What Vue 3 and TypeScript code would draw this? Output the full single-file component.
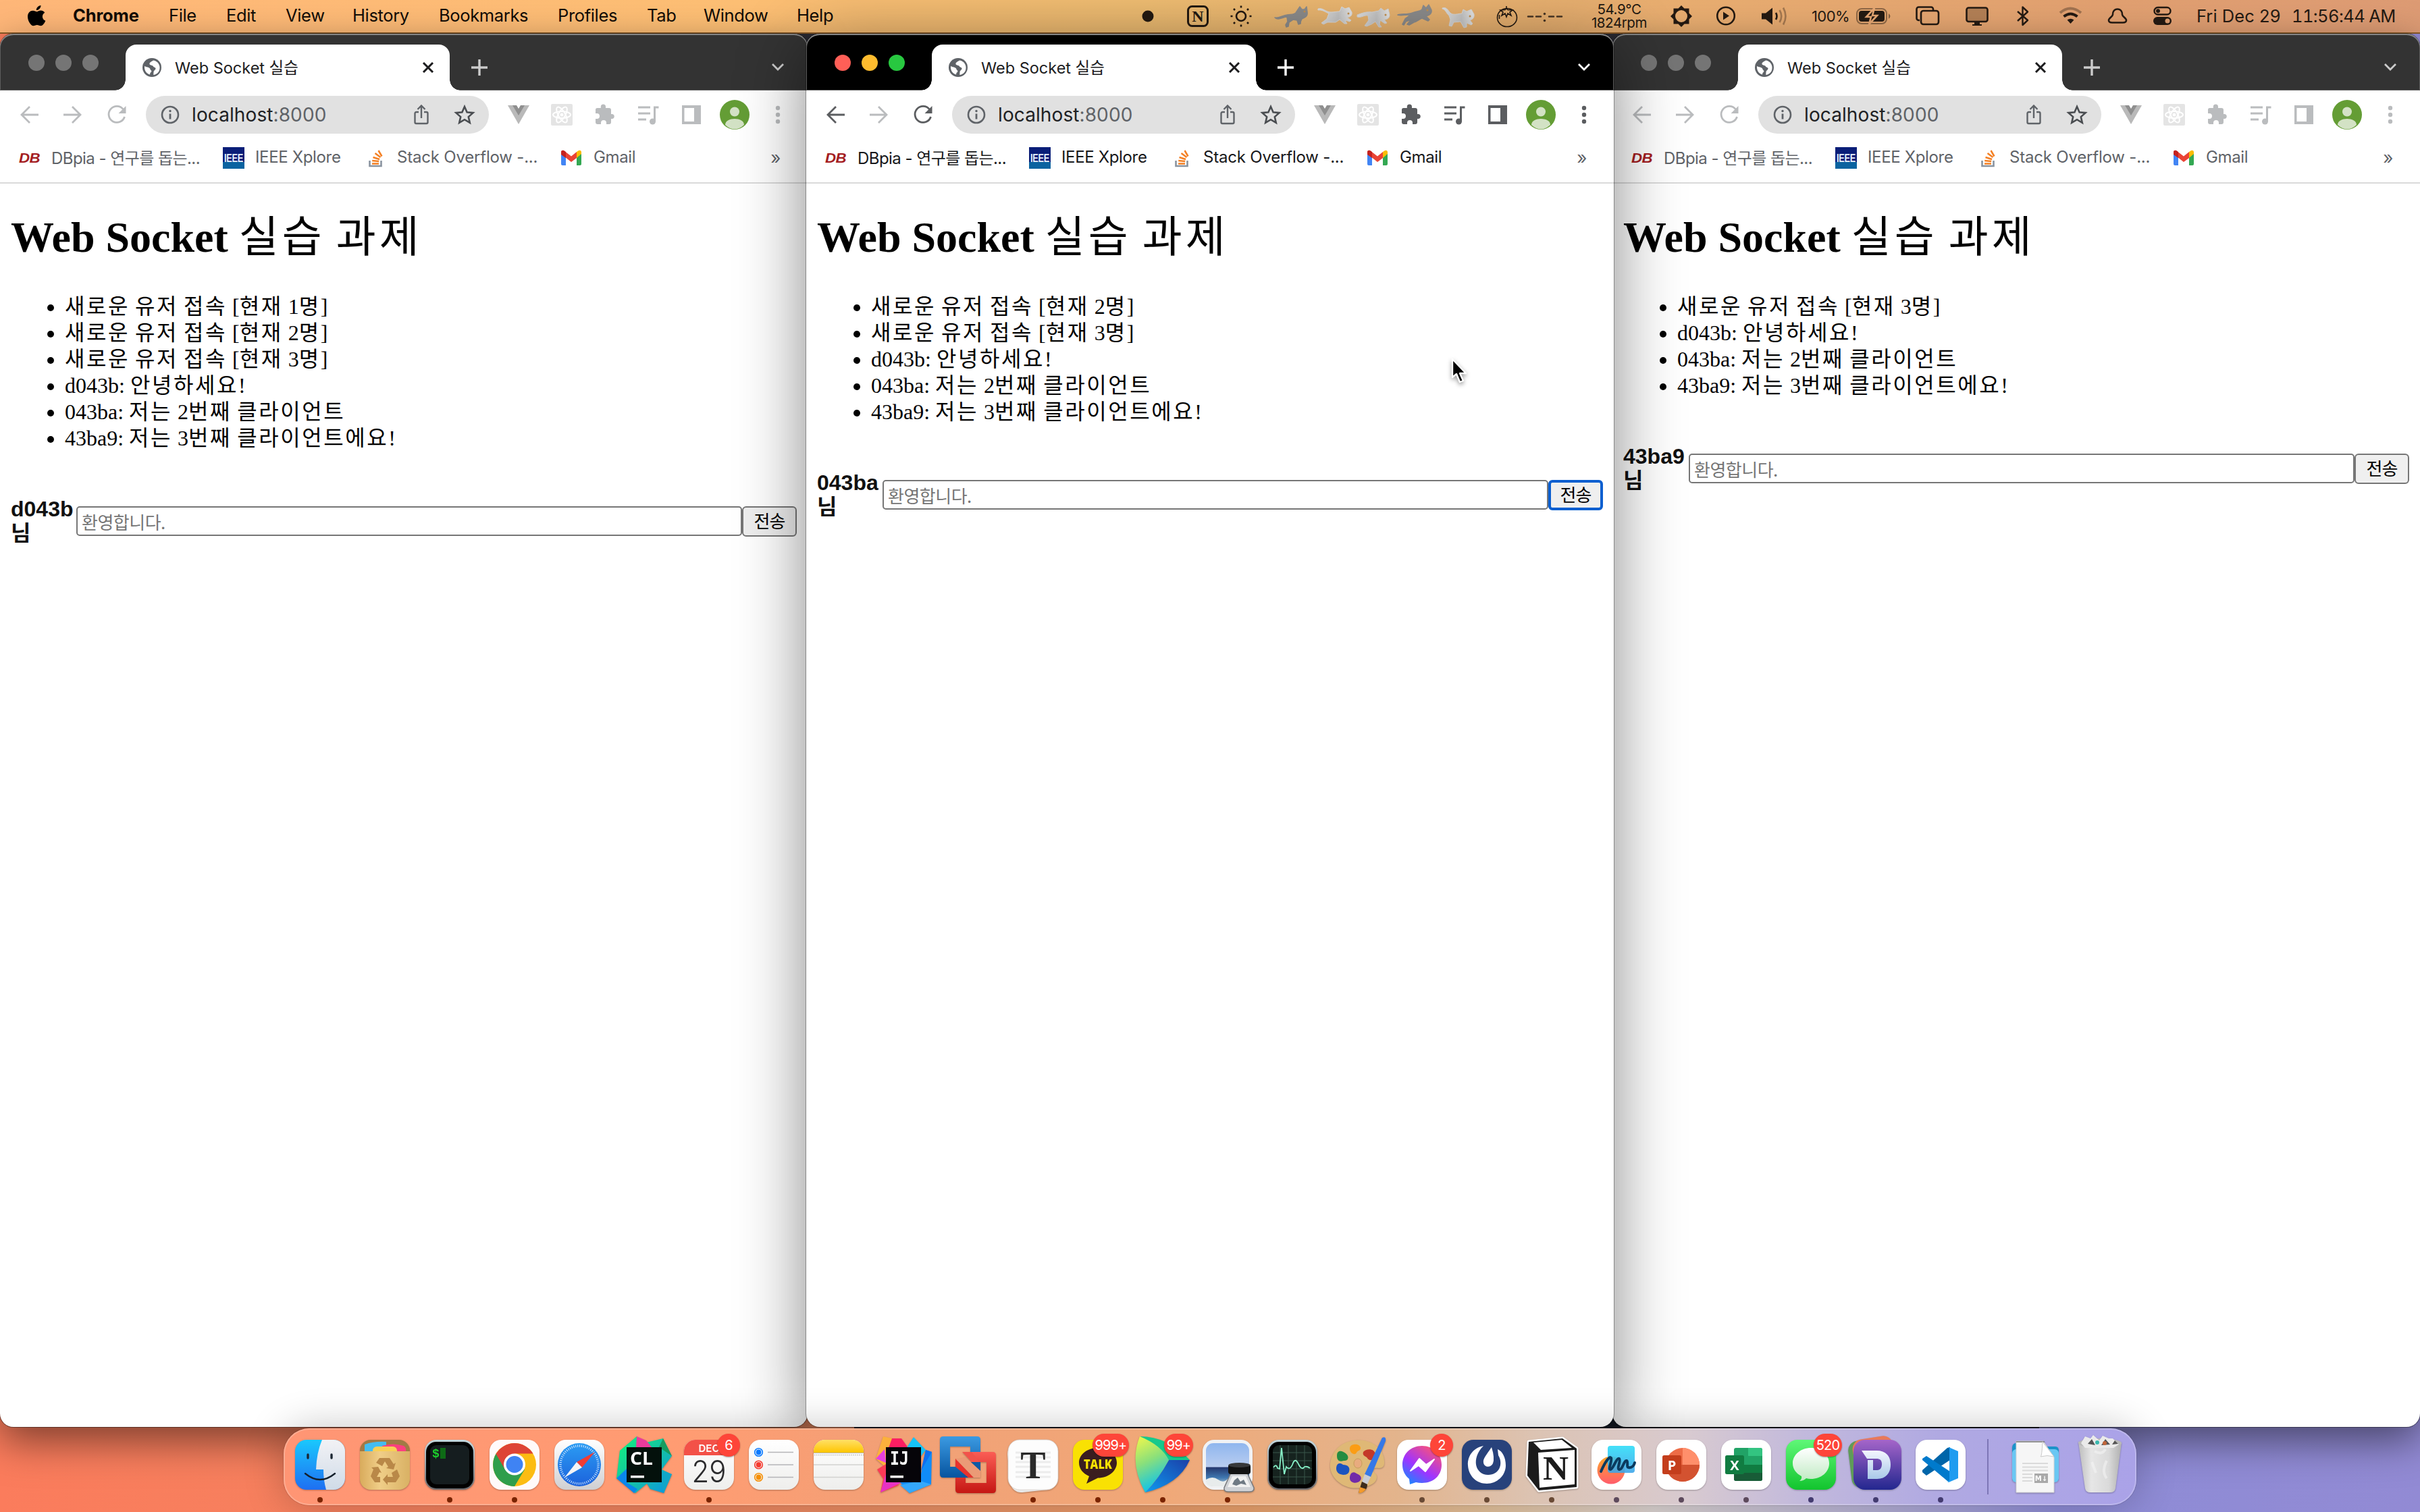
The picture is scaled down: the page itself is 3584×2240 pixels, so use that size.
<script setup lang="ts">
interface ChatWindow {
  id: string
  left: number
  active: boolean
  logs: string[]
}

const menus = [
  { label: 'File', width: 85 },
  { label: 'Edit', width: 88 },
  { label: 'View', width: 99 },
  { label: 'History', width: 128 },
  { label: 'Bookmarks', width: 176 },
  { label: 'Profiles', width: 132 },
  { label: 'Tab', width: 84 },
  { label: 'Window', width: 138 },
  { label: 'Help', width: 60 },
]

const windows: ChatWindow[] = [
  {
    id: 'd043b',
    left: 0,
    active: false,
    logs: [
      '새로운 유저 접속 [현재 1명]',
      '새로운 유저 접속 [현재 2명]',
      '새로운 유저 접속 [현재 3명]',
      'd043b: 안녕하세요!',
      '043ba: 저는 2번째 클라이언트',
      '43ba9: 저는 3번째 클라이언트에요!',
    ],
  },
  {
    id: '43ba9',
    left: 2388,
    active: false,
    logs: [
      '새로운 유저 접속 [현재 3명]',
      'd043b: 안녕하세요!',
      '043ba: 저는 2번째 클라이언트',
      '43ba9: 저는 3번째 클라이언트에요!',
    ],
  },
  {
    id: '043ba',
    left: 1194,
    active: true,
    logs: [
      '새로운 유저 접속 [현재 2명]',
      '새로운 유저 접속 [현재 3명]',
      'd043b: 안녕하세요!',
      '043ba: 저는 2번째 클라이언트',
      '43ba9: 저는 3번째 클라이언트에요!',
    ],
  },
]

function runs(text: string) {
  return (text.match(/[가-힣]+|[^가-힣]+/g) ?? []).map((t) => ({ t, ko: /[가-힣]/.test(t) }))
}
</script>

<template>
  <div class="desktop">
    <svg class="defs" width="0" height="0">
      <defs>
        <linearGradient id="gBlue" x1="0" y1="0" x2="0" y2="1"><stop offset="0" stop-color="#1ac8fd" /><stop offset="1" stop-color="#1e6ff2" /></linearGradient>
        <linearGradient id="gGrey" x1="0" y1="0" x2="0" y2="1"><stop offset="0" stop-color="#f2f2f5" /><stop offset="1" stop-color="#cfdbe8" /></linearGradient>
        <linearGradient id="gWhite" x1="0" y1="0" x2="0" y2="1"><stop offset="0" stop-color="#fff" /><stop offset="1" stop-color="#eeeeec" /></linearGradient>
        <linearGradient id="gSteel" x1="0" y1="0" x2="0" y2="1"><stop offset="0" stop-color="#c4d8de" /><stop offset="1" stop-color="#6b6a6e" /></linearGradient>
        <linearGradient id="gSand" x1="0" y1="0" x2="1" y2="0"><stop offset="0" stop-color="#d9ab5c" /><stop offset=".4" stop-color="#f0ce88" /><stop offset="1" stop-color="#d9b164" /></linearGradient>
        <linearGradient id="gSafari" x1="0" y1="0" x2="0" y2="1"><stop offset="0" stop-color="#2b9cf3" /><stop offset="1" stop-color="#1c62dc" /></linearGradient>
        <linearGradient id="gSafariBg" x1="0" y1="0" x2="0" y2="1"><stop offset="0" stop-color="#fff" /><stop offset="1" stop-color="#cfcfd2" /></linearGradient>
        <linearGradient id="gCl" x1="0" y1="0" x2="1" y2="1"><stop offset="0" stop-color="#12f37a" /><stop offset=".55" stop-color="#14c0a8" /><stop offset="1" stop-color="#0a92e8" /></linearGradient>
        <linearGradient id="gYellow" x1="0" y1="0" x2="0" y2="1"><stop offset="0" stop-color="#ffe066" /><stop offset="1" stop-color="#ffc500" /></linearGradient>
        <linearGradient id="gVmB" x1="0" y1="0" x2="0" y2="1"><stop offset="0" stop-color="#3b9ae2" /><stop offset="1" stop-color="#07549f" /></linearGradient>
        <linearGradient id="gVmR" x1="0" y1="0" x2="0" y2="1"><stop offset="0" stop-color="#fb5d55" /><stop offset="1" stop-color="#c51713" /></linearGradient>
        <linearGradient id="gLeaf" x1="0" y1="0" x2=".3" y2="1"><stop offset="0" stop-color="#f4f84a" /><stop offset=".5" stop-color="#8be07a" /><stop offset="1" stop-color="#10c4e8" /></linearGradient>
        <linearGradient id="gLeaf2" x1="1" y1="0" x2="0" y2="1"><stop offset="0" stop-color="#1b3fa8" /><stop offset="1" stop-color="#0d9af0" /></linearGradient>
        <linearGradient id="gSky" x1="0" y1="0" x2="0" y2="1"><stop offset="0" stop-color="#8fb6ee" /><stop offset=".55" stop-color="#b9cdf0" /><stop offset=".56" stop-color="#24376e" /><stop offset=".8" stop-color="#3f77b0" /><stop offset="1" stop-color="#c9d6d6" /></linearGradient>
        <linearGradient id="gMsgr" x1="0.1" y1="1" x2=".8" y2="0"><stop offset="0" stop-color="#0b8fff" /><stop offset=".45" stop-color="#a033ff" /><stop offset="1" stop-color="#ff5470" /></linearGradient>
        <linearGradient id="gFree" x1="0" y1="0" x2="0" y2="1"><stop offset="0" stop-color="#2adcf8" /><stop offset="1" stop-color="#3ba3e8" /></linearGradient>
        <linearGradient id="gFreeO" x1="0" y1="0" x2="0" y2="1"><stop offset="0" stop-color="#ffa72a" /><stop offset="1" stop-color="#ff5c6c" /></linearGradient>
        <linearGradient id="gGreen" x1="0" y1="0" x2="0" y2="1"><stop offset="0" stop-color="#5ff777" /><stop offset="1" stop-color="#12c42e" /></linearGradient>
        <linearGradient id="gBubble" x1="0" y1="0" x2="0" y2="1"><stop offset="0" stop-color="#fff" /><stop offset="1" stop-color="#bfeac2" /></linearGradient>
        <linearGradient id="gDash" x1="0" y1="0" x2="0" y2="1"><stop offset="0" stop-color="#a565c9" /><stop offset="1" stop-color="#23278f" /></linearGradient>
        <linearGradient id="gD" x1="0" y1="0" x2="0" y2="1"><stop offset="0" stop-color="#f4f6ff" /><stop offset="1" stop-color="#a9c8e8" /></linearGradient>
        <linearGradient id="gBin" x1="0" y1="0" x2="1" y2="0"><stop offset="0" stop-color="#bdbdbd" /><stop offset=".3" stop-color="#e6e6e6" /><stop offset=".7" stop-color="#dadada" /><stop offset="1" stop-color="#b0b0b0" /></linearGradient>
        <linearGradient id="gCat" x1="0" y1="0" x2="1" y2="0"><stop offset="0" stop-color="#e6e6e6" /><stop offset=".6" stop-color="#c9c9c9" /><stop offset="1" stop-color="#ececec" /></linearGradient>
      </defs>
    </svg>

    <header class="menubar">
      <svg class="apple" width="108" height="48" viewBox="0 0 108 48">
        <path d="M60.500 8c.3 3-2.800 7.300-6.700 7.200-.3-3.100 3-7 6.700-7.200zM54.500 17.300c1.500 0 3.400-1.700 6-1.700 2 0 4.300 1.100 5.800 3.200-5 2.900-4.300 9.900 1 12-1 3.100-4 7.400-6.800 7.400-2.200 0-3-1.300-5.600-1.300-2.700 0-3.600 1.300-5.600 1.300-3.600 0-8.300-7.300-8.300-13.500 0-6.100 4-9 7.600-9 2.500 0 4.500 1.600 5.900 1.600z" />
      </svg>
      <span class="menu strong">Chrome</span>
      <span v-for="m in menus" :key="m.label" class="menu" :style="{ width: m.width + 'px' }">{{ m.label }}</span>
      <div class="spacer"></div>
      <div class="status">
        <svg width="64" height="48" viewBox="1680 0 64 48"><circle cx="1700" cy="24" r="8.500" fill="#241a12" /></svg>
        <svg width="66" height="48" viewBox="1744 0 66 48"><rect x="1759.500" y="9.500" width="29" height="29" rx="6" class="ln" stroke-width="3" /><text x="1774" y="32" text-anchor="middle" class="nglyph">N</text></svg>
        <svg width="66" height="48" viewBox="1810 0 66 48"><g class="ln" stroke-width="2.600"><circle cx="1838" cy="24" r="7" /><path d="M1838 8.500v3M1838 36.500v3M1822.500 24h3M1850.500 24h3M1827 13l2 2M1847 33l2 2M1827 35l2-2M1847 15l2-2" /></g></svg>
        <svg width="320" height="48" viewBox="1876 0 320 48">
          <g fill="#8f8f8f" stroke="#8f8f8f" stroke-width="1.600" stroke-linejoin="round"><path d="M1888 26c6 2 10-3 18-4 6-1 10 0 13-3l6-9 3 4h4l3-4 1 8c1 6-3 8-8 10-2 3-2 4-2 7l-3 1-2-6-6-1-6 4-1 6-3 1-1-3 3-5-1-7c-6 0-13 6-18 1z" /><path d="M2070 22c6-2 14 0 22-3 8-3 11-2 14-5l2-6 4 4 4-5 4 8c1 6-4 8-8 9l5 5-2 2-9-4c-5 2-7 5-12 6l-7 4-3-1 6-7-8 3-3 5-2-1 4-8 8-6c-6-1-13 2-19 0z" /></g>
          <g fill="url(#gCat)"><path d="M1952 13c8-2 11 5 19 5 6 0 9-1 13-1l3-7 5 3 6-2 4 7c1 6-3 7-7 8l6 4-2 2-7-2 3 5-4 0-7-6-6 4h-12l-6 3-3-2 8-6 3-8c-5-2-10-6-16-5z" stroke="#e2e2e2" stroke-linejoin="round" /><path d="M2010 22c8-3 14-5 22-4l10-2 3-4 5 4 6-3 2 9c0 5-4 7-8 7l4 5-3 1-7-5-1 6 3 4-4 0-5-8-6 4-7 3-3-1 6-8-1-7c-6-1-10 4-16 2z" stroke="#dadada" stroke-linejoin="round" /><path d="M2136 12c8-3 9 7 15 9 6 1 10-1 14-1l2-6 5 3 7-3 4 7c1 6-3 8-6 9l4 5-2 2-7-3v6l-4 1-5-9-10 1-3 6-4-1 2-9-2-6c-4-3-5-9-10-10z" stroke="#dedede" stroke-linejoin="round" /></g>
          <g fill="#c9934f"><circle cx="1932" cy="17" r="1.500" /><circle cx="1997" cy="20" r="1.500" /><circle cx="2052" cy="22" r="1.500" /><circle cx="2114" cy="15" r="1.500" /><circle cx="2177" cy="24" r="1.500" /></g>
        </svg>
        <svg width="62" height="48" viewBox="2196 0 62 48"><g class="ln" stroke-width="1.600"><ellipse cx="2232" cy="26" rx="14.500" ry="13.500" /><path d="M2231 9v5M2222 15l7-.5 2-2.500 2 2.500 7 .5-4 3 2 5-5-3-2 5-2-5-5 3 2-5zM2220.500 22v6" /></g></svg>
        <svg width="88" height="48" viewBox="2258 0 88 48"><g stroke="#4a3726" stroke-width="2.600" stroke-linecap="round"><path d="M2263 24.500h7M2275 24.500h7M2294 24.500h7M2306 24.500h7" /></g><circle cx="2287.500" cy="20.500" r="1.800" fill="#4a3726" /><circle cx="2287.500" cy="30.500" r="1.800" fill="#4a3726" /></svg>
        <div class="temps"><span>54.9°C</span><span>1824rpm</span></div>
        <svg width="76" height="48" viewBox="2450 0 76 48"><path fill-rule="evenodd" fill="#241a12" d="M2490 8l4.500 4.500h7v7L2506 24l-4.500 4.500v7h-7L2490 40l-4.500-4.500h-7v-7L2474 24l4.500-4.500v-7h7zM2490 15a9 9 0 1 0 0 18a9 9 0 1 0 0-18z" /></svg>
        <svg width="64" height="48" viewBox="2526 0 64 48"><circle cx="2556" cy="23.500" r="12.800" class="ln" stroke-width="2.600" /><path d="M2552 17.500v12l9-6z" fill="#241a12" /></svg>
        <svg width="88" height="48" viewBox="2590 0 88 48"><path d="M2609 19.500h6l10-8v25l-10-8h-6z" fill="#241a12" /><path d="M2630 19q3 5 0 10" class="ln" stroke-width="2.600" /><g class="ln" opacity=".35" stroke-width="2.600"><path d="M2635.500 15q5.500 9 0 18M2641 11.500q7 12.500 0 25" /></g></svg>
        <span class="percent">100%</span>
        <svg width="80" height="48" viewBox="2745 0 80 48"><rect x="2750" y="13" width="44" height="22" rx="7" class="ln" stroke-width="2" opacity=".45" /><path d="M2797 20q5 4 0 8z" fill="#241a12" opacity=".5" /><rect x="2753" y="16" width="38" height="16" rx="4" fill="#241a12" /><path d="M2776 12l-12 13h7l-3 11 12-13h-7z" fill="#241a12" stroke="#e4a571" stroke-width="2.600" /></svg>
        <svg width="70" height="48" viewBox="2825 0 70 48"><g class="ln" stroke-width="2.600"><path d="M2843 30h-1.500a3 3 0 0 1-3-3V13.500a3 3 0 0 1 3-3H2860a3 3 0 0 1 3 3V15" /><rect x="2845" y="16" width="26" height="20" rx="3.500" /></g></svg>
        <svg width="76" height="48" viewBox="2895 0 76 48"><rect x="2912.500" y="11.500" width="31" height="20.500" rx="3" fill="#b27f55" stroke="#241a12" stroke-width="2.600" /><path d="M2924 33h8v3h3v2h-14v-2h3z" fill="#241a12" /></svg>
        <svg width="62" height="48" viewBox="2971 0 62 48"><path d="M2988 17l15 13-7.500 7V10.500l7.500 7L2988 31" class="ln" stroke-width="2.400" stroke-linejoin="round" /></svg>
        <svg width="72" height="48" viewBox="3033 0 72 48"><path d="M3051 19q15-13 31 0" class="ln" stroke-width="4" opacity=".35" /><path d="M3056.500 24.500q10-8 20 0" class="ln" stroke-width="4" /><path d="M3066.500 35l-5-5.500q5-3.500 10 0z" fill="#241a12" /></svg>
        <svg width="68" height="48" viewBox="3105 0 68 48"><path d="M3136 13.500c5 0 7 4 7 8 0 3 6 5 6 8.500 0 3-3 3.500-5 3.500h-16c-2 0-5-.5-5-3.500 0-3.500 6-5.500 6-8.500 0-4 2-8 7-8z" class="ln" stroke-width="2.600" /></svg>
        <svg width="80" height="48" viewBox="3173 0 80 48"><rect x="3190.500" y="11" width="24" height="10.500" rx="5.250" class="ln" stroke-width="2.400" /><circle cx="3196" cy="16.200" r="3" fill="#241a12" /><rect x="3189" y="25" width="27" height="12" rx="6" fill="#241a12" /><circle cx="3210" cy="31" r="3.500" fill="#e0a072" /></svg>
        <span class="clock date">Fri Dec 29</span>
        <span class="clock time">11:56:44 AM</span>
      </div>
    </header>

    <section
      v-for="w in windows"
      :key="w.id"
      class="window"
      :class="{ active: w.active }"
      :style="{ left: w.left + 'px' }"
    >
      <div class="tabstrip">
        <div class="lights"><i></i><i></i><i></i></div>
        <div class="tab">
          <svg width="28" height="28" viewBox="0 0 28 28"><circle cx="14" cy="14" r="14" fill="#5f6368" /><path d="M16 3.500c-3 2-6 3-5.500 5.500.5 2 5 1.500 5.500 3.500.5 1.500 4 1 3.500 3.500-.5 2-3 2.500-3 4.500 0 2-.5 3.500 0 4.500 6-1 9.500-5.500 9-12C25 8 21 4 16 3.500zM3 12c2 1.500 5 1 7 2.500 2 1.300 1 2.500 2.500 3.500 1.500 1 1 2.500-.5 3.500-1 .6-.5 2-1 3C5.500 23 2.500 18 3 12z" fill="#fff" /></svg>
          <span class="tabtitle">Web Socket 실습</span>
          <svg width="18" height="16" viewBox="0 0 18 16"><path d="M2 1l14 14M16 1L2 15" stroke="#1c1c1e" stroke-width="3" /></svg>
        </div>
        <svg class="plus" width="24" height="24" viewBox="0 0 24 24"><path d="M12 0v24M0 12h24" stroke="currentColor" stroke-width="3.400" /></svg>
        <svg class="down" width="20" height="14" viewBox="0 0 20 14"><path d="M2 2l8 8 8-8" fill="none" stroke="currentColor" stroke-width="2.800" /></svg>
      </div>

      <div class="toolbar">
        <svg class="tool" width="216" height="72" viewBox="0 134 216 72" fill="none" stroke-width="2.800">
          <path d="M57 170H33M44 158l-12 12 12 12" stroke="currentColor" />
          <path d="M94 170h24M107 158l12 12-12 12" stroke="#babcbe" />
          <path d="M182.500 162a12 12 0 1 0 2 11" stroke="currentColor" /><path d="M186.500 157v11h-11z" fill="currentColor" />
        </svg>
        <div class="omnibox">
          <svg width="28" height="28" viewBox="0 0 28 28"><circle cx="14" cy="14" r="12" fill="none" stroke="#5f6368" stroke-width="2.600" /><path d="M14 12.500v8" stroke="#5f6368" stroke-width="2.800" /><circle cx="14" cy="8.500" r="1.700" fill="#5f6368" /></svg>
          <span class="url">localhost<em>:8000</em></span>
          <svg class="share" width="24" height="32" viewBox="0 0 24 32" fill="none" stroke="#5f6368" stroke-width="2.400"><path d="M8 12H4.500A2 2 0 0 0 2.500 14v13a2 2 0 0 0 2 2h15a2 2 0 0 0 2-2V14a2 2 0 0 0-2-2H16M12 21V3M6.500 8L12 2.500 17.500 8" /></svg>
          <svg width="32" height="32" viewBox="0 0 32 32"><path d="M16 4l3.600 8.300 9 .8-6.800 6 2 8.800L16 23.200 8.200 27.900l2-8.800-6.800-6 9-.8z" fill="none" stroke="#4a4d51" stroke-width="2.600" /></svg>
        </div>
        <svg class="tool" width="472" height="72" viewBox="724 134 472 72">
          <path d="M752 156h32l-16 28z" fill="#b9b9b9" /><path d="M759 156h18l-9 15z" fill="#8f8f8f" /><path d="M765 156h6l-3 5z" fill="#fff" />
          <rect x="816" y="154" width="32" height="32" rx="2" fill="#e4e4e4" /><g fill="none" stroke="#fff" stroke-width="2"><ellipse cx="832" cy="170" rx="13" ry="5" /><ellipse cx="832" cy="170" rx="13" ry="5" transform="rotate(60 832 170)" /><ellipse cx="832" cy="170" rx="13" ry="5" transform="rotate(120 832 170)" /></g><circle cx="832" cy="170" r="2.500" fill="#fff" />
          <path fill="currentColor" d="M907 169h-2v-6a3 3 0 0 0-3-3h-5v-2a3.600 3.600 0 0 0-7.200 0v2h-5a2.800 2.800 0 0 0-2.800 3v5h2a4 4 0 0 1 0 8h-2v5a3 3 0 0 0 3 3h5v-2a4 4 0 0 1 8 0v2h4a3 3 0 0 0 3-3v-5h2a3.600 3.600 0 0 0 0-7z" />
          <g stroke="currentColor" stroke-width="3" fill="none"><path d="M945 159h18M945 168h18M945 177h12M969.500 180v-21h6" /></g><circle cx="966.500" cy="180" r="4.500" fill="currentColor" />
          <path fill="currentColor" fill-rule="evenodd" d="M1010 156h28v28h-28zM1013.500 160v20H1028v-20z" />
          <g><circle cx="1088" cy="170" r="22" fill="#649d35" /><circle cx="1088" cy="165.500" r="7" fill="#d3e2c5" /><path d="M1074 185c0-12 28-12 28 0q-14 13-28 0z" fill="#d3e2c5" /></g>
          <g fill="currentColor"><circle cx="1152" cy="160" r="3.200" /><circle cx="1152" cy="170" r="3.200" /><circle cx="1152" cy="180" r="3.200" /></g>
        </svg>
      </div>

      <div class="bookmarks">
        <div class="bm b1"><svg width="32" height="32" viewBox="0 0 32 32"><text x="0" y="23" class="db" textLength="31" lengthAdjust="spacingAndGlyphs">DB</text></svg><span>DBpia - 연구를 돕는...</span></div>
        <div class="bm b2"><svg width="32" height="32" viewBox="0 0 32 32"><rect width="32" height="32" fill="#0a1e78" /><rect y="22" width="32" height="10" fill="#0b63a0" /><text x="2" y="22" class="ieee" textLength="28" lengthAdjust="spacingAndGlyphs">IEEE</text></svg><span>IEEE Xplore</span></div>
        <div class="bm b3"><svg width="24" height="32" viewBox="0 0 24 32"><path d="M1.500 20v8h17v-8" fill="none" stroke="#8a94a0" stroke-width="2.600" /><path d="M5 24.500h10M5.200 20l10 1M6.500 15l9.600 3M9.500 9l8 6M14.500 5l5 8.500" stroke="#f48024" stroke-width="2.500" /></svg><span>Stack Overflow -...</span></div>
        <div class="bm b4"><svg width="30" height="24" viewBox="0 0 30 24"><path d="M0 3v18q0 2 2 2h5V9z" fill="#4285f4" /><path d="M30 3v18q0 2-2 2h-5V9z" fill="#34a853" /><path d="M23 3l3-2q4-1 4 3v2l-7 6z" fill="#fbbc04" /><path d="M0 6V4q0-4 4-3l11 8.500L23 3v9l-8 6-15-12z" fill="#ea4335" /><path d="M0 4v3l7 5V3L4 1Q0 0 0 4z" fill="#c5221f" /></svg><span>Gmail</span></div>
        <span class="more">»</span>
      </div>

      <main class="page">
        <h1>Web Socket <span class="ko">실습</span> <span class="ko">과제</span></h1>
        <ul>
          <li v-for="(line, i) in w.logs" :key="i"><span v-for="(r, j) in runs(line)" :key="j" :class="{ ko: r.ko }">{{ r.t }}</span></li>
        </ul>
        <form class="send" @submit.prevent>
          <label>{{ w.id }} 님</label>
          <input type="text" placeholder="환영합니다." />
          <button type="submit">전송</button>
        </form>
      </main>
    </section>

    <svg class="cursor" width="32" height="44" viewBox="0 0 32 44"><path d="M3 2v27l6-5 5 12 5-2-5-11h9z" fill="#000" stroke="#fff" stroke-width="2.400" stroke-linejoin="round" /></svg>

    <nav class="dock">
      <div class="app on"><svg viewBox="0 0 96 98"><rect x="11" y="17" width="74" height="74" rx="17" fill="url(#gBlue)" /><path d="M51 17h17a17 17 0 0 1 17 17v40a17 17 0 0 1-17 17H57q-4-14-4-30H42q1-25 9-44z" fill="url(#gGrey)" /><path d="M30 39v5M65 39v5" stroke="#1c2733" stroke-width="3.400" stroke-linecap="round" /><path d="M26 67q22 18 44 0" fill="none" stroke="#14202c" stroke-width="2.400" stroke-linecap="round" /></svg></div>
      <div class="app"><svg viewBox="0 0 96 98"><rect x="11" y="17" width="74" height="74" rx="16" fill="#a17a45" /><path d="M18 36V24q14-5 32-4v14z" fill="#43bdf0" /><path d="M44 26q16-5 32 0 4 2 3 10H44z" fill="#fb3f7f" /><rect x="30" y="27" width="36" height="14" rx="6" fill="#f8cf55" /><path d="M11 34h74v41a16 16 0 0 1-16 16H27a16 16 0 0 1-16-16z" fill="url(#gSand)" /><g fill="#b98848"><path d="M40 44h15l6 9 3-2-3 10-11-2 3-2-5-8-4 7-9-5z" /><path d="M66 61l4 10-6 9H52v4l-7-8 7-8v4h8l-2-6z" /><path d="M28 58l10-1 5 9-3-1-4 7h5v8H33l-6-9 4-10z" /></g></svg></div>
      <div class="app on"><svg viewBox="0 0 96 98"><rect x="11" y="17" width="74" height="74" rx="17" fill="url(#gSteel)" /><rect x="13" y="20" width="70" height="69" rx="15" fill="#000" /><rect x="19" y="25" width="58" height="58" rx="9" fill="#151d1f" /><text x="22" y="43" class="prompt">$</text><rect x="34" y="29" width="8" height="16" fill="#0e6b16" /></svg></div>
      <div class="app on"><svg viewBox="0 0 96 98"><rect x="11" y="17" width="74" height="74" rx="17" fill="#fffafa" /><circle cx="48" cy="54" r="32" fill="#fcbc12" /><path d="M48 54L21 37a32 32 0 0 0 27 49l15-25z" fill="#2f9e4c" /><path d="M48 54L34 61 20.500 38a32 32 0 0 1 55-.5H48z" fill="#de4436" /><circle cx="48" cy="53.500" r="16" fill="#fff" /><circle cx="48" cy="53.500" r="12.500" fill="#3f83f3" /></svg></div>
      <div class="app"><svg viewBox="0 0 96 98"><rect x="11" y="17" width="74" height="74" rx="17" fill="url(#gSafariBg)" /><circle cx="48" cy="54" r="32" fill="url(#gSafari)" /><circle cx="48" cy="54" r="28" fill="none" stroke="#d6eaff" stroke-width="3.500" stroke-dasharray="1 1.930" /><path d="M71 35L52 58l-8-8z" fill="#f23c34" /><path d="M26 73l18-23 8 8z" fill="#f4f4f6" /></svg></div>
      <div class="app"><svg viewBox="0 0 96 98"><path d="M12 33l25-21 14 9 25-6 13 26-15 20 15 7-12 28-20-6-5-8-17 14L7 74z" fill="url(#gCl)" /><path d="M37 12l14 6 8 10H36z" fill="#e93c9c" /><path d="M7 74l15-14v20l16 10-5 6z" fill="#0a86ea" /><path d="M76 15l-6 13 19 13z" fill="#169c60" /><path d="M89 68l-15-3v15l3 16z" fill="#10a6c8" /><rect x="22" y="28" width="52" height="52" fill="#04110c" /><text x="27" y="54" class="jb" textLength="34" lengthAdjust="spacingAndGlyphs">CL</text><rect x="28" y="70" width="20" height="3.500" fill="#fff" /></svg></div>
      <div class="app on"><svg viewBox="0 0 96 98"><rect x="11" y="17" width="74" height="74" rx="17" fill="url(#gWhite)" /><path d="M11 40v-6a17 17 0 0 1 17-17h40a17 17 0 0 1 17 17v6z" fill="#f35148" /><text x="48" y="35" text-anchor="middle" class="month">DEC</text><text x="48" y="80" text-anchor="middle" class="day" textLength="51" lengthAdjust="spacingAndGlyphs">29</text></svg><b class="badge one">6</b></div>
      <div class="app"><svg viewBox="0 0 96 98"><rect x="11" y="17" width="74" height="74" rx="17" fill="url(#gWhite)" /><g fill="none" stroke-width="1.600"><circle cx="25.500" cy="35.500" r="5.800" stroke="#0a7aff" /><circle cx="25.500" cy="54" r="5.800" stroke="#f53b30" /><circle cx="25.500" cy="72.500" r="5.800" stroke="#f59007" /><path d="M39 35.500h38M39 54h38M39 72.500h38" stroke="#b5b5b8" /></g><circle cx="25.500" cy="35.500" r="3.900" fill="#0a7aff" /><circle cx="25.500" cy="54" r="3.900" fill="#f53b30" /><circle cx="25.500" cy="72.500" r="3.900" fill="#f59007" /></svg></div>
      <div class="app"><svg viewBox="0 0 96 98"><rect x="11" y="17" width="74" height="74" rx="17" fill="url(#gWhite)" /><path d="M11 36v-2a17 17 0 0 1 17-17h40a17 17 0 0 1 17 17v2z" fill="url(#gYellow)" /><path d="M11 36.500h74" stroke="#b9b4a8" /><path d="M12 39.500h73" stroke="#b9b9b9" stroke-width="1.500" stroke-dasharray="1.500 1.500" /><path d="M11 54h74M11 72.500h74" stroke="#d2d2d0" stroke-width="1.500" /></svg></div>
      <div class="app"><svg viewBox="0 0 96 98"><path d="M18 12l22 5 10 11H22v30L7 45z" fill="#fcb13c" /><path d="M7 45l13-14 2 20z" fill="#e83fe0" /><path d="M31 15h14l10 14H26z" fill="#fc1e63" /><path d="M63 13l18 19-9 12-20-14z" fill="#16c4f8" /><path d="M81 32l9 3-1 48-32 13-14-16 29-2z" fill="#108cf8" /><path d="M81 32l9 3-16 28z" fill="#0d6ff0" /><path d="M9 61l13-8v28l20 3-28 11 4-20z" fill="#fb3a56" /><path d="M14 95l8-28 22 14z" fill="#e732c4" /><path d="M57 96l-14-12 30-6 16 5z" fill="#34a8fb" /><rect x="22" y="28" width="52" height="52" fill="#060409" /><text x="28" y="54" class="jb slab" textLength="28" lengthAdjust="spacingAndGlyphs">IJ</text><rect x="28.500" y="70" width="19.500" height="3.500" fill="#fff" /></svg></div>
      <div class="app"><svg viewBox="0 0 96 98"><path fill="url(#gVmR)" fill-rule="evenodd" d="M40 35h44q5 0 5 5v51q0 5-5 5H34q-5 0-5-5V45l15 17v19h31V50H53z" /><path fill="url(#gVmB)" fill-rule="evenodd" d="M11 12h50q5 0 5 5v18H51V27H21v30h14l21 16H11q-5 0-5-5V17q0-5 5-5z" /><path d="M39 35h14l13 17v11z" fill="#f2524b" /><path d="M29 45l27 28h-8L29 57z" fill="#e8322d" /><path d="M30 46l14-3 22 20v10H56z" fill="#eb9a76" /><path d="M52 50h14v13z" fill="#0a5aa6" /></svg></div>
      <div class="app on"><svg viewBox="0 0 96 98"><rect x="12" y="20" width="70" height="73" rx="16" fill="#e9e9e9" transform="rotate(-6 48 56)" /><rect x="11" y="17" width="74" height="74" rx="17" fill="#fdfdfd" stroke="#d8d0cb" stroke-width=".8" /><path d="M22 36h52M22 43h52M22 50h52M22 57h52M22 65h52M22 72h52" stroke="#ececec" stroke-width="3" /><text x="48" y="74" text-anchor="middle" class="typora">T</text></svg></div>
      <div class="app on"><svg viewBox="0 0 96 98"><rect x="11" y="17" width="74" height="74" rx="17" fill="#f9e103" /><path d="M48 29c16 0 28 10 28 22S64 73.500 48 73.500L31 82l4-11c-9-4-15-11-15-20 0-12 12-22 28-22z" fill="#3b1d1f" /><text x="48" y="60" text-anchor="middle" class="talk" textLength="42" lengthAdjust="spacingAndGlyphs">TALK</text></svg><b class="badge wide">999+</b></div>
      <div class="app on"><svg viewBox="0 0 96 98"><path d="M14 12q42 0 74 35H57Q40 28 14 12z" fill="#16c98c" /><path d="M88 47q-16 36-66 48 20-20 35-48z" fill="url(#gLeaf2)" /><path d="M14 12q32 13 43 35-14 26-35 48Q-2 52 14 12z" fill="url(#gLeaf)" /></svg><b class="badge mid">99+</b></div>
      <div class="app on"><svg viewBox="0 0 96 98"><rect x="11" y="17" width="74" height="74" rx="17" fill="#f1f2f4" /><rect x="16" y="22" width="64" height="64" rx="11" fill="url(#gSky)" /><path d="M16 76q10-6 18 0t14-1v11H27q-11 0-11-8z" fill="#e8ecec" /><path d="M53 66h24l10 22q1 6-7 6H49q-7 0-6-6z" fill="#cfd2d6" stroke="#77797d" stroke-width="1.500" /><path d="M55 71h20l7 16H48z" fill="#f1f1f1" /><path d="M58 77l5-4 4 6 5-3 4 8-8-2-7 3-6-2z" fill="#6f7a84" /><rect x="49" y="53" width="33" height="15" rx="4" fill="#131313" /><ellipse cx="65.500" cy="54.500" rx="16" ry="3.500" fill="#38393b" /></svg></div>
      <div class="app"><svg viewBox="0 0 96 98"><rect x="11" y="17" width="74" height="74" rx="17" fill="url(#gSteel)" /><rect x="13" y="20" width="70" height="69" rx="15" fill="#000" /><rect x="19" y="25" width="58" height="58" rx="9" fill="#16231f" /><path d="M30 25v58M42 25v58M54 25v58M66 25v58M19 36h58M19 48h58M19 60h58M19 72h58" stroke="#38574b" stroke-width="1" /><path d="M20 58q4-6 6 1l3 1 3-31 4 39 3-11q5 6 9-3 4-12 9-1 5 10 9 4 4-1 8 2" fill="none" stroke="#86efc6" stroke-width="1.800" /></svg></div>
      <div class="app"><svg viewBox="0 0 96 98"><path d="M44 18C22 20 7 38 8 58c2 18 22 34 45 30 12-2 24-6 24-16 0-7-8-6-6-11 3-6 15 3 17-8C90 30 68 15 44 18z" fill="#dfb876" /><ellipse cx="49" cy="52" rx="6" ry="7" fill="#e8ab7e" stroke="#c79c5c" /><path d="M37 30c0-8 15-8 16-1 0 5-4 3-6 7-2 5-10 1-10-6z" fill="#fb9d14" /><path d="M18 41c0-10 8-8 14-3 5 5 2 11-4 10-6 2-10 0-10-7z" fill="#238c41" /><path d="M17 60c0-8 5-10 10-6 7 0 11 4 9 10-2 8-19 6-19-4z" fill="#1b54c0" /><path d="M37 74c0-8 5-11 10-7 8 3 8 8 5 11-5 5-15 3-15-4z" fill="#722aa8" /><path d="M57 35c4-5 16-6 18 3 1 9-9 12-12 6-2-3-8-3-6-9z" fill="#c4392a" /><path d="M85 14q6-3 5 5L68 72l-9-4z" fill="#3578e8" /><path d="M59 68l9 4-5 11-8-4z" fill="#c9ccd4" /><path d="M55 79l8 4q0 11-13 13 3-11 5-17z" fill="#3d2c1d" /><path d="M52 87l9 3q-4 6-11 6z" fill="#f39a2c" /></svg></div>
      <div class="app on"><svg viewBox="0 0 96 98"><rect x="11" y="17" width="74" height="74" rx="17" fill="#fff" /><path d="M48 26c17 0 29 12 29 28S65 81 48 81q-5 0-9-1l-9 3-1-8c-6-5-10-12-10-21 0-16 12-28 29-28z" fill="url(#gMsgr)" /><path d="M31 63l13-18 10 9 12-8-13 18-10-9z" fill="#fff" stroke="#fff" stroke-width="2" stroke-linejoin="round" /></svg><b class="badge one">2</b></div>
      <div class="app on"><svg viewBox="0 0 96 98"><rect x="11" y="17" width="74" height="74" rx="17" fill="#28427b" /><path d="M43 26C28 29 19 41 20 55c1 16 13 27 28 27s28-12 28-27c0-12-5-21-12-24l1 9c8 13 1 29-15 29-19 0-26-24-7-43z" fill="#fff" /><path d="M55 28q5 16 2 24c-3 7-13 6-14-1-1-6 4-11 12-23z" fill="#fff" /></svg></div>
      <div class="app on"><svg viewBox="0 0 96 98"><path d="M14 20l50-5 21 15v57l-56 5-17-22z" fill="#fff" stroke="#fff" stroke-width="5" stroke-linejoin="round" /><path d="M14 20l50-5 21 15v57l-56 5-17-22z" fill="#1b1b1b" /><path d="M21 21l42-4 15 12-46 3z" fill="#fff" /><path d="M28 36l54-4v51l-52 5z" fill="#fff" /><text x="54" y="76" text-anchor="middle" class="notion" textLength="38" lengthAdjust="spacingAndGlyphs">N</text></svg></div>
      <div class="app on"><svg viewBox="0 0 96 98"><rect x="11" y="17" width="74" height="74" rx="17" fill="#fff" /><circle cx="40" cy="62" r="20.500" fill="url(#gFreeO)" /><rect x="35" y="26" width="40" height="40" rx="4" fill="url(#gFree)" opacity=".88" /><path d="M25 64c6-14 13-24 15-20 2 4-5 17-1 17s9-18 13-16c3 2-4 15 0 16 5 1 7-14 11-13 3 1-1 10 3 10 5 1 8-3 9-7" fill="none" stroke="#0b3a5e" stroke-width="4" stroke-linecap="round" /></svg></div>
      <div class="app on"><svg viewBox="0 0 96 98"><rect x="11" y="17" width="74" height="74" rx="17" fill="#fff" /><circle cx="50" cy="54" r="25" fill="#ed6c47" /><path d="M50 29a25 25 0 0 1 25 25H50z" fill="#ff8f6b" /><path d="M50 79a25 25 0 0 0 25-25H25a25 25 0 0 0 25 25z" fill="#d35230" /><rect x="20" y="40" width="28" height="28" rx="2.500" fill="#c43e1c" /><text x="34" y="61.500" text-anchor="middle" class="office">P</text></svg></div>
      <div class="app on"><svg viewBox="0 0 96 98"><rect x="11" y="17" width="74" height="74" rx="17" fill="#fff" /><rect x="30" y="29" width="42" height="49" rx="3" fill="#21a366" /><path d="M51 29h18q3 0 3 3v9H51z" fill="#33c481" /><path d="M30 54h42v12H30z" fill="#107c41" /><path d="M30 66h42v9q0 3-3 3H33q-3 0-3-3z" fill="#185c37" /><rect x="17" y="40" width="28" height="28" rx="2.500" fill="#107c41" /><text x="31" y="61.500" text-anchor="middle" class="office">X</text></svg></div>
      <div class="app on"><svg viewBox="0 0 96 98"><rect x="11" y="17" width="74" height="74" rx="17" fill="url(#gGreen)" /><path d="M48 29c15 0 27 10 27 23S63 75 48 75q-4 0-7-1-4 4-10 4 4-3 3-7c-8-4-13-11-13-19 0-13 12-23 27-23z" fill="url(#gBubble)" /></svg><b class="badge three">520</b></div>
      <div class="app on"><svg viewBox="0 0 96 98"><rect x="10" y="16" width="64" height="70" rx="14" fill="#5f9b58" transform="rotate(-7 44 54)" /><rect x="16" y="14" width="60" height="60" rx="14" fill="#e8795a" transform="rotate(-9 44 44)" /><rect x="15" y="17" width="71" height="74" rx="17" fill="url(#gDash)" /><path fill="url(#gD)" fill-rule="evenodd" d="M27 33h22c14 0 21 8 21 21 0 12-7 21-20 21H36V47h8v15h6c5 0 7-4 7-9 0-6-3-8-8-8H35z" /></svg></div>
      <div class="app on"><svg viewBox="0 0 96 98"><rect x="11" y="17" width="74" height="74" rx="17" fill="#fff" /><path d="M58 29l4-1v19L27 70l-6-5v-3z" fill="#0065a9" /><path d="M21 45l6-4 35 23v15l-4-1-37-31z" fill="#007acc" /><path d="M60 28l14 6v40l-14 6-2-1 3-2V31z" fill="#1f9cf0" /></svg></div>
      <i class="sep"></i>
      <div class="app"><svg viewBox="0 0 96 98"><path d="M14 29q0-6 5-7h20l4 5h35q5 0 5 6v40q0 6-5 6H19q-5 0-5-6z" fill="#1b93c9" /><rect x="14" y="31" width="69" height="49" rx="6" fill="#6ac7f3" /><path d="M20 19h40l16 24v52H20z" fill="#f6f6f6" stroke="#d5d5d5" stroke-width="1" /><path d="M20 20h42" stroke="#777" stroke-width="1.500" /><path d="M59 20q-1 22-3 22 10-3 20 0z" fill="#fff" stroke="#c9c9c9" stroke-width="1" /><path d="M29 52h38M29 57.500h38M29 62.500h38M29 68h15M29 73h15M29 78h15" stroke="#dadada" stroke-width="2" /><rect x="47" y="67" width="20" height="14" fill="#a9a9a9" /><text x="57" y="78" text-anchor="middle" class="md">M↓</text></svg></div>
      <div class="app"><svg viewBox="0 0 96 98"><path d="M16 20l64 1-9 68q-1 6-8 6H34q-7 0-8-6z" fill="url(#gBin)" /><ellipse cx="48" cy="22" rx="32" ry="7" fill="#b9b9b9" /><path d="M20 22l6-10 8 3 4-5 9 8 5-7 9 4 6 0 9 9-8 5H26z" fill="#eaeaea" /><path d="M30 23l6-7 5 9zM50 25l6-9 7 8zM66 24l4-6 5 5z" fill="#555" /><circle cx="44" cy="21" r="3" fill="#38b8ae" /><circle cx="55" cy="22" r="3" fill="#c0653a" /><path d="M40 34q12 6 16-3M36 50l6 16M58 48q-8 16 0 26" stroke="#f4f4f4" stroke-width="4" fill="none" opacity=".6" /></svg></div>
    </nav>
  </div>
</template>

<style>
html,
body {
  margin: 0;
  overflow: hidden;
}
</style>

<style scoped>
.desktop {
  position: relative;
  width: 3584px;
  height: 2240px;
  overflow: hidden;
  font-family: Inter, "Noto Sans CJK KR", sans-serif;
  background:
    linear-gradient(#18202c, #18202c) 1265px 2080px / 1755px 36px no-repeat,
    linear-gradient(#2c2c34, #2c2c34) 1150px 50px / 1280px 40px no-repeat,
    linear-gradient(90deg, #fb7c5c 0, #f08560 1000px, #ea9668 1500px, #eba36e 1850px, #e6c39c 2200px, #ddd5d3 2450px, #b9b4d6 2750px, #8e8cd6 3050px, #928ad4 3584px);
}
.defs {
  position: absolute;
}
.menubar {
  position: relative;
  display: flex;
  align-items: center;
  height: 48px;
  border-bottom: 2px solid #8a5a26;
  background: linear-gradient(90deg, #ffb779 0, #fdbf74 1100px, #f2bf73 1700px, #e8ad70 2500px, #e1a070 3100px, #dd9b74 3584px);
}
.menubar svg {
  display: block;
  flex: none;
}
.menu {
  flex: none;
  font-size: 25.500px;
  line-height: 46px;
  padding-bottom: 2px;
  letter-spacing: -0.350px;
  white-space: nowrap;
  color: #120c06;
  box-sizing: border-box;
}
.menu.strong {
  width: 142px;
  font-weight: 700;
  letter-spacing: -0.150px;
}
.spacer {
  flex: 1;
}
.status {
  display: flex;
  align-items: center;
  width: 1904px;
  flex: none;
  color: #241a12;
}
.ln {
  fill: none;
  stroke: #241a12;
}
.nglyph {
  font: 700 24px "Liberation Serif", serif;
  fill: #241a12;
}
.temps {
  display: flex;
  flex-direction: column;
  align-items: center;
  width: 104px;
  flex: none;
  box-sizing: border-box;
}
.temps span {
  font-size: 20.500px;
  line-height: 20px;
  letter-spacing: -0.400px;
}
.percent {
  width: 67px;
  padding-left: 5px;
  box-sizing: border-box;
  flex: none;
  font-size: 22px;
  letter-spacing: -0.600px;
}
.clock {
  flex: none;
  padding-bottom: 2px;
  font-size: 25.500px;
  letter-spacing: 0.050px;
  white-space: nowrap;
}
.date {
  width: 141px;
}
.time {
  letter-spacing: -0.600px;
  font-variant-numeric: tabular-nums;
}

.window {
  position: absolute;
  top: 50px;
  width: 1196px;
  height: 2064px;
  display: flex;
  flex-direction: column;
  overflow: hidden;
  border-radius: 20px;
  background: #fff;
  color: #babcbe;
  box-shadow: 0 0 0 1px rgba(0, 0, 0, 0.4), 0 20px 60px rgba(0, 0, 0, 0.5);
}
.window.active {
  color: #5b5d60;
  box-shadow: 0 0 0 1px rgba(0, 0, 0, 0.3), 0 16px 100px rgba(0, 0, 0, 0.48);
}
.tabstrip {
  display: flex;
  align-items: center;
  height: 84px;
  flex: none;
  box-sizing: border-box;
  padding-top: 16px;
  border-radius: 20px 20px 0 0;
  background: #333;
  box-shadow: inset 0 2px 0 #858585, inset 0 0 0 1px #5c5c5c;
  color: #ccc;
}
.active .tabstrip {
  background: #000;
  color: #fff;
}
.lights {
  display: flex;
  gap: 16px;
  width: 144px;
  padding-left: 42px;
  margin-top: -14px;
}
.lights i {
  width: 24px;
  height: 24px;
  border-radius: 50%;
  background: #757575;
}
.active .lights i:nth-child(1) {
  background: #ff5f57;
}
.active .lights i:nth-child(2) {
  background: #febc2e;
}
.active .lights i:nth-child(3) {
  background: #28c840;
}
.tab {
  position: relative;
  display: flex;
  align-items: center;
  width: 480px;
  height: 68px;
  flex: none;
  box-sizing: border-box;
  padding: 0 23px 0 25px;
  border-radius: 16px 16px 0 0;
  background: #fff;
}
.tab::before,
.tab::after {
  content: "";
  position: absolute;
  bottom: 0;
  width: 16px;
  height: 16px;
}
.tab::before {
  left: -16px;
  background: radial-gradient(circle at 0 0, transparent 15.500px, #fff 16px);
}
.tab::after {
  right: -16px;
  background: radial-gradient(circle at 100% 0, transparent 15.500px, #fff 16px);
}
.tabtitle {
  flex: 1;
  margin: -2px 0 0 20px;
  font-size: 23.500px;
  letter-spacing: 0;
  color: #1c1c1e;
}
.plus {
  margin-left: 32px;
}
.down {
  margin-left: auto;
  margin-right: 34px;
}
.toolbar {
  display: flex;
  align-items: center;
  height: 72px;
  flex: none;
}
.tool {
  flex: none;
}
.omnibox {
  display: flex;
  align-items: center;
  width: 508px;
  height: 56px;
  flex: none;
  box-sizing: border-box;
  padding: 0 20px 0 22px;
  border-radius: 28px;
  background: #e1e1e1;
}
.url {
  flex: 1;
  margin-left: 18px;
  font-size: 28px;
  letter-spacing: 0.100px;
  color: #202124;
}
.url em {
  font-style: normal;
  color: #5f6368;
}
.share {
  margin-right: 36px;
}
.bookmarks {
  display: flex;
  align-items: center;
  height: 64px;
  flex: none;
  box-sizing: content-box;
  padding-left: 28px;
  border-bottom: 2px solid #dadada;
  font-size: 24px;
  letter-spacing: -0.350px;
  color: #5f6368;
}
.active .bookmarks {
  color: #17181a;
}
.bm {
  display: flex;
  align-items: center;
  flex: none;
  gap: 16px;
  white-space: nowrap;
  margin-top: -9px;
}
.bm span {
  margin-top: -2px;
}
.bm svg {
  overflow: visible;
}
.b1 {
  width: 302px;
  letter-spacing: -0.550px;
}
.b2 {
  width: 216px;
}
.b3 {
  width: 285px;
  letter-spacing: -0.200px;
}
.b3,
.b4 {
  gap: 18px;
}
.more {
  margin: -10px 40px 0 auto;
  font-size: 26px;
  color: #5f6368;
}
.db {
  font: italic 700 21px "Liberation Sans", sans-serif;
  fill: #a41e22;
}
.ieee {
  font: 700 17px "Liberation Sans", sans-serif;
  fill: #e8f2ff;
}

.page {
  padding: 0 16px;
  color: #000;
  font-family: "Liberation Serif", "Noto Sans CJK KR", serif;
}
.ko {
  letter-spacing: 0.080em;
}
h1 {
  margin: 42px 0 0;
  font-size: 64px;
  line-height: 76px;
  white-space: nowrap;
}
h1 .ko {
  font-weight: 400;
}
ul {
  margin: 45px 0 0;
  padding-left: 80px;
  font-size: 32px;
}
li {
  height: 39px;
  line-height: 39px;
  white-space: nowrap;
}
.send {
  display: flex;
  align-items: center;
  margin-top: 67px;
}
.send label {
  width: 97px;
  flex: none;
  font: 700 32px/36px "Liberation Sans", "Noto Sans CJK KR", sans-serif;
  color: #111;
}
.send input {
  flex: 1;
  height: 44px;
  box-sizing: border-box;
  padding: 0 6px;
  border: 2px solid #767676;
  border-radius: 5px;
  background: #fff;
  font: 26px "Noto Sans CJK KR", sans-serif;
  letter-spacing: -0.500px;
}
.send input::placeholder {
  color: #757575;
  opacity: 1;
}
.send button {
  width: 81px;
  height: 45px;
  flex: none;
  box-sizing: border-box;
  padding: 0 0 3px;
  border: 2px solid #767676;
  border-radius: 6px;
  background: #efefef;
  font: 26px/38px "Noto Sans CJK KR", sans-serif;
  letter-spacing: -1px;
  color: #000;
}
.active .send button {
  border: 4px solid #0b5fd0;
  line-height: 34px;
}
.cursor {
  position: absolute;
  left: 2148px;
  top: 530px;
  filter: drop-shadow(0 3px 3px rgba(0, 0, 0, 0.4));
}

.dock {
  position: absolute;
  left: 420px;
  top: 2116px;
  display: flex;
  width: 2744px;
  height: 114px;
  box-sizing: border-box;
  padding: 0 6px;
  border-radius: 38px;
  background: linear-gradient(90deg, #ff9574 0, #ff9c72 600px, #f2a076 900px, #f0a878 1300px, #e3b48c 1650px, #dcc3b2 1850px, #d8cad0 2080px, #c2b9dc 2250px, #b0a9e2 2450px, #aaa2e8 2744px);
  box-shadow: inset 0 0 0 2px rgba(255, 255, 255, 0.22), 0 0 60px rgba(0, 0, 0, 0.24), 0 0 0 1px rgba(0, 0, 0, 0.1);
}
.app {
  position: relative;
  width: 96px;
  height: 114px;
  flex: none;
}
.app svg {
  display: block;
  width: 96px;
  height: 98px;
  filter: drop-shadow(0 1px 1px rgba(0, 0, 0, 0.28));
}
.app.on::after {
  content: "";
  display: block;
  width: 8px;
  height: 8px;
  margin: 4px auto 0;
  border-radius: 50%;
  background: #7a2400;
}
.app.on:nth-child(n + 18)::after {
  background: #694a35;
}
.app.on:nth-child(n + 21)::after {
  background: #5d4a5c;
}
.app.on:nth-child(n + 24)::after {
  background: #433b70;
}
.badge {
  position: absolute;
  top: 8px;
  height: 34px;
  border-radius: 17px;
  background: #fe4539;
  box-shadow: 0 1px 2px rgba(0, 0, 0, 0.35);
  color: #fff;
  font: 400 20px/34px Inter, sans-serif;
  letter-spacing: -0.900px;
  text-align: center;
}
.one {
  left: 60px;
  width: 34px;
}
.wide {
  left: 40px;
  width: 54px;
}
.mid {
  left: 50px;
  width: 43px;
}
.three {
  left: 52px;
  width: 42px;
}
.sep {
  width: 44px;
  flex: none;
  background: linear-gradient(#7d76b6, #7d76b6) 21px 16px / 2px 82px no-repeat;
}
.prompt {
  font: 700 18px "Liberation Mono", monospace;
  fill: #1ccf2b;
}
.jb {
  font: 700 27px "Open Sans", sans-serif;
  fill: #fff;
}
.slab {
  font-family: "DejaVu Sans Mono", monospace;
}
.month {
  font: 600 15px Inter, sans-serif;
  fill: #fff;
}
.day {
  font: 300 45px Inter, sans-serif;
  fill: #2b2b2d;
}
.typora {
  font: 700 56px "Liberation Serif", serif;
  fill: #2a2a2a;
}
.talk {
  font: 800 19px "Open Sans", sans-serif;
  fill: #f9e103;
}
.notion {
  font: 700 50px "Liberation Serif", serif;
  fill: #1b1b1b;
}
.office {
  font: 700 20px "Open Sans", sans-serif;
  fill: #fff;
}
.md {
  font: 700 10px "DejaVu Sans", sans-serif;
  fill: #fff;
}
</style>
